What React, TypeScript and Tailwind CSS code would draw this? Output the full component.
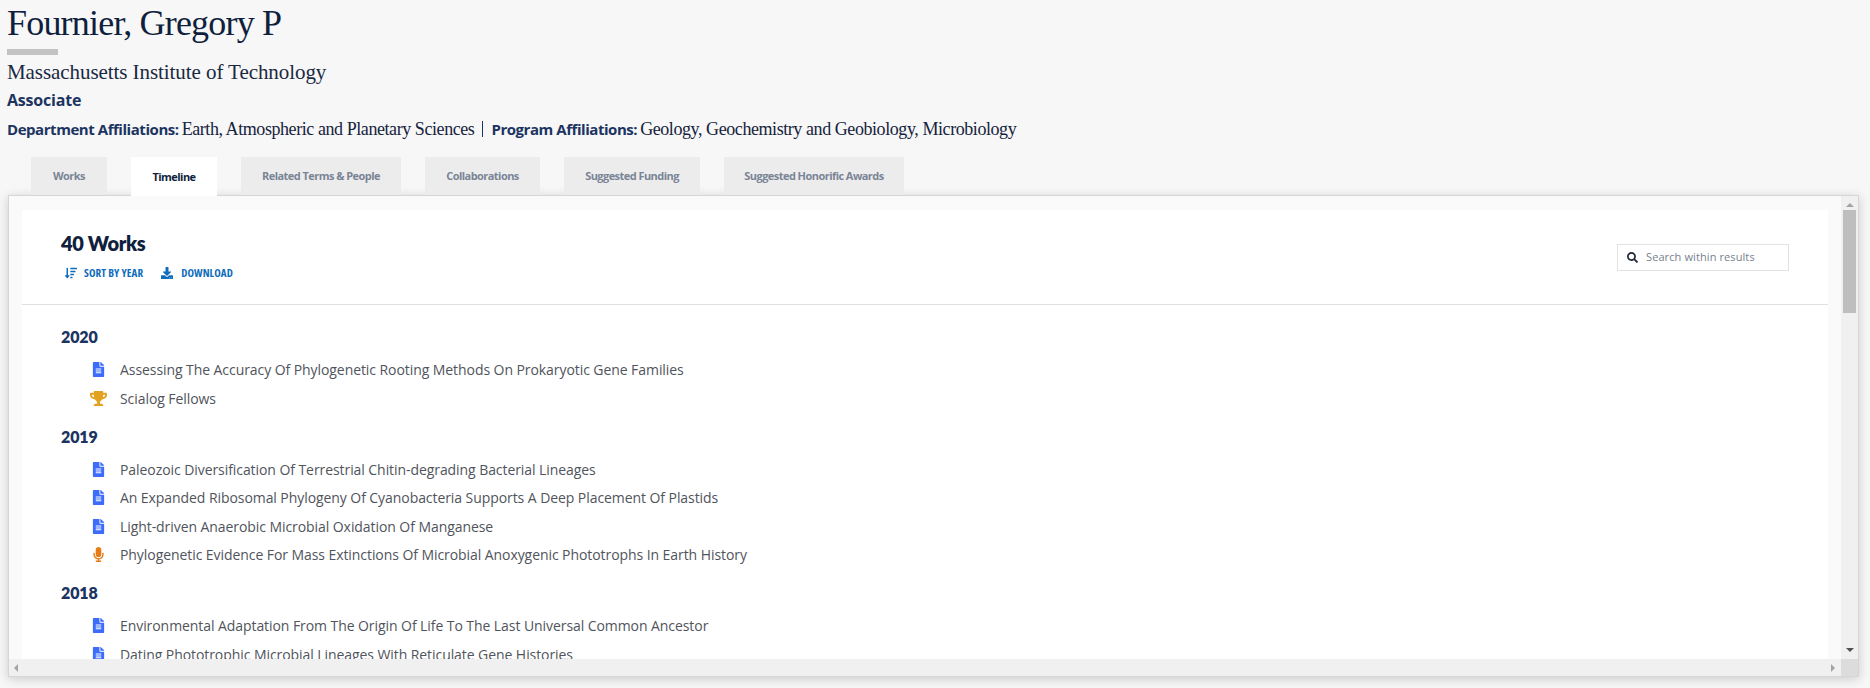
import React from 'react';
import { FaDownload, FaFileAlt, FaMicrophone, FaSearch, FaSortAmountDown, FaTrophy } from 'react-icons/fa';

type WorkKind = 'paper' | 'award' | 'talk';

const tabs = [
  { label: 'Works', width: 'w-[76px]' },
  { label: 'Timeline', width: 'w-[86px]', active: true },
  { label: 'Related Terms & People', width: 'w-[160px]' },
  { label: 'Collaborations', width: 'w-[115px]' },
  { label: 'Suggested Funding', width: 'w-[136px]' },
  { label: 'Suggested Honorific Awards', width: 'w-[180px]' },
];

const timeline: { year: string; items: { kind: WorkKind; title: string }[] }[] = [
  {
    year: '2020',
    items: [
      { kind: 'paper', title: 'Assessing The Accuracy Of Phylogenetic Rooting Methods On Prokaryotic Gene Families' },
      { kind: 'award', title: 'Scialog Fellows' },
    ],
  },
  {
    year: '2019',
    items: [
      { kind: 'paper', title: 'Paleozoic Diversification Of Terrestrial Chitin-degrading Bacterial Lineages' },
      { kind: 'paper', title: 'An Expanded Ribosomal Phylogeny Of Cyanobacteria Supports A Deep Placement Of Plastids' },
      { kind: 'paper', title: 'Light-driven Anaerobic Microbial Oxidation Of Manganese' },
      { kind: 'talk', title: 'Phylogenetic Evidence For Mass Extinctions Of Microbial Anoxygenic Phototrophs In Earth History' },
    ],
  },
  {
    year: '2018',
    items: [
      { kind: 'paper', title: 'Environmental Adaptation From The Origin Of Life To The Last Universal Common Ancestor' },
      { kind: 'paper', title: 'Dating Phototrophic Microbial Lineages With Reticulate Gene Histories' },
    ],
  },
];

const WorkIcon: React.FC<{ kind: WorkKind }> = ({ kind }) => {
  if (kind === 'award') return <FaTrophy className="text-[#e2a11f]" size={17} />;
  if (kind === 'talk') return <FaMicrophone className="text-[#e67c17]" size={15} />;
  return <FaFileAlt className="text-[#3d6cfa]" size={15} />;
};

export default function App() {
  return (
    <div className="h-[688px] w-[1870px] overflow-hidden bg-[#f7f7f7] font-['Open_Sans',sans-serif]">
      <div className="px-[7px] pt-[2px]">
        <h1 className="font-['Liberation_Serif',serif] text-[36px] leading-[42px] tracking-[-0.8px] text-[#0f1f3d]">
          Fournier, Gregory P
        </h1>
        <div className="mt-[5px] h-[6px] w-[51px] bg-[#c2c2c2]" />
        <p className="mt-[4px] font-['Liberation_Serif',serif] text-[21px] leading-[26px] tracking-[-0.07px] text-[#1a2942]">
          Massachusetts Institute of Technology
        </p>
        <p className="mt-[4px] text-[16px] leading-[22px] font-bold tracking-[-0.2px] text-[#1c3461]">Associate</p>
        <p className="mt-[7px] flex items-center text-[15px] leading-[22px] text-[#1c3461]">
          <span className="font-bold tracking-[-0.45px]">Department Affiliations:</span>
          <span className="ml-[3px] font-['Liberation_Serif',serif] text-[18px] tracking-[-0.43px] text-[#16233d]">
            Earth, Atmospheric and Planetary Sciences
          </span>
          <span className="mx-[8px] h-[16px] w-px bg-[#1c3461]" />
          <span className="font-bold tracking-[-0.45px]">Program Affiliations:</span>
          <span className="ml-[3px] font-['Liberation_Serif',serif] text-[18px] tracking-[-0.43px] text-[#16233d]">
            Geology, Geochemistry and Geobiology, Microbiology
          </span>
        </p>
      </div>

      <div className="mt-[17px] flex h-[38px] gap-[24px] pl-[31px]">
        {tabs.map((tab) => (
          <div
            key={tab.label}
            className={
              tab.active
                ? `${tab.width} z-10 flex h-[39px] items-center justify-center bg-white pt-[1px] text-[11px] font-bold tracking-[-0.55px] text-[#0f1f3d]`
                : `${tab.width} flex items-center justify-center bg-[#ececec] pt-[1px] text-[11px] font-bold tracking-[-0.55px] text-[#7a8496]`
            }
          >
            {tab.label}
          </div>
        ))}
      </div>

      <div className="ml-[8px] flex h-[482px] w-[1851px] flex-col border border-[#d6d6d6] bg-[#fafafa] shadow-[0_2px_10px_rgba(0,0,0,0.18)]">
        <div className="flex min-h-0 flex-1">
          <div className="min-w-0 flex-1 overflow-hidden pt-[14px] pr-[13px] pl-[13px]">
            <div className="h-[460px] rounded-[2px] bg-white">
              <div className="flex h-[95px] justify-between border-b border-[#e0e0e0] pr-[39px] pl-[39px]">
                <div>
                  <h2 className="pt-[21px] font-['Lato',sans-serif] text-[20px] leading-[24px] font-extrabold tracking-[-0.35px] text-[#0f1f3d]">
                    40 Works
                  </h2>
                  <div className="mt-[10px] flex items-center text-[11px] leading-[16px] font-bold tracking-[0.1px] text-[#0f6cbd] [font-stretch:75%]">
                    <FaSortAmountDown size={12} className="ml-[4px]" />
                    <span className="ml-[7px]">SORT BY YEAR</span>
                    <FaDownload size={12} className="ml-[18px]" />
                    <span className="ml-[8px]">DOWNLOAD</span>
                  </div>
                </div>
                <div className="mt-[34px] flex h-[27px] w-[172px] items-center border border-[#e2e2e2] pl-[9px] text-[11px] tracking-[0.1px] text-[#777f8e]">
                  <FaSearch size={11} className="text-[#222938]" />
                  <span className="ml-[8px]">Search within results</span>
                </div>
              </div>
              <div className="pt-[20px] pl-[39px]">
                {timeline.map((group) => (
                  <section key={group.year} className="mb-[12px]">
                    <h3 className="font-['Lato',sans-serif] text-[16px] leading-[24px] font-extrabold tracking-[-0.1px] text-[#1c3461]">
                      {group.year}
                    </h3>
                    <ul className="pt-[6.5px]">
                      {group.items.map((item) => (
                        <li key={item.title} className="flex h-[28.5px] items-center text-[14px] tracking-[-0.07px] text-[#50545c]">
                          <span className="flex w-[59px] justify-end pr-[12px]">
                            <span className="flex w-[20px] justify-center">
                              <WorkIcon kind={item.kind} />
                            </span>
                          </span>
                          {item.title}
                        </li>
                      ))}
                    </ul>
                  </section>
                ))}
              </div>
            </div>
          </div>
          {/* vertical scrollbar */}
          <div className="flex w-[17px] flex-col items-center bg-[#f0f0f0]">
            <div className="mt-[7px] h-0 w-0 border-x-[4px] border-b-[4px] border-x-transparent border-b-[#a3a3a3]" />
            <div className="mt-[3px] h-[103px] w-[13px] bg-[#bebebe]" />
            <div className="mt-auto mb-[7px] h-0 w-0 border-x-[4px] border-t-[4px] border-x-transparent border-t-[#505050]" />
          </div>
        </div>
        {/* horizontal scrollbar */}
        <div className="flex h-[17px] items-center bg-[#f0f0f0]">
          <div className="ml-[5px] h-0 w-0 border-y-[4px] border-r-[4px] border-y-transparent border-r-[#a3a3a3]" />
          <div className="mr-[6px] ml-auto h-0 w-0 border-y-[4px] border-l-[4px] border-y-transparent border-l-[#a3a3a3]" />
          <div className="h-[17px] w-[17px] bg-[#dcdcdc]" />
        </div>
      </div>
    </div>
  );
}
